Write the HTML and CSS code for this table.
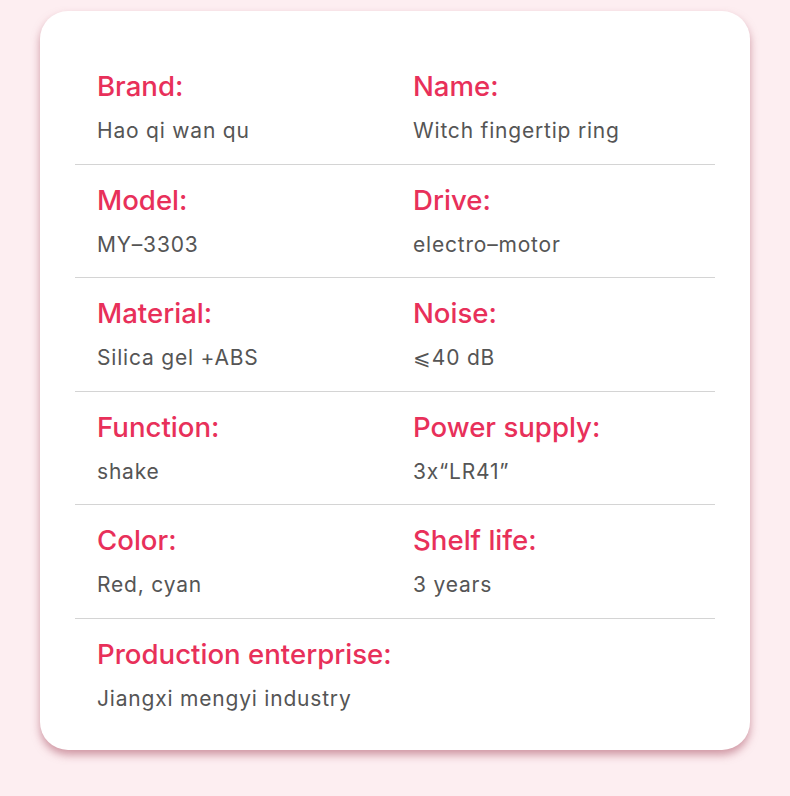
FILE: index.html
```html
<!DOCTYPE html>
<html lang="en">
<head>
<meta charset="utf-8">
<title>Product specs</title>
<link rel="stylesheet" href="styles.css">
</head>
<body>
<div class="card">
  <div class="row">
    <div class="cell"><div class="label">Brand:</div><div class="value">Hao qi wan qu</div></div>
    <div class="cell"><div class="label">Name:</div><div class="value">Witch fingertip ring</div></div>
  </div>
  <div class="row">
    <div class="cell"><div class="label">Model:</div><div class="value">MY–3303</div></div>
    <div class="cell"><div class="label">Drive:</div><div class="value">electro–motor</div></div>
  </div>
  <div class="row">
    <div class="cell"><div class="label">Material:</div><div class="value">Silica gel +ABS</div></div>
    <div class="cell"><div class="label">Noise:</div><div class="value">⩽40 dB</div></div>
  </div>
  <div class="row">
    <div class="cell"><div class="label">Function:</div><div class="value">shake</div></div>
    <div class="cell"><div class="label">Power supply:</div><div class="value">3x“LR41”</div></div>
  </div>
  <div class="row">
    <div class="cell"><div class="label">Color:</div><div class="value">Red, cyan</div></div>
    <div class="cell"><div class="label">Shelf life:</div><div class="value">3 years</div></div>
  </div>
  <div class="row last">
    <div class="cell wide"><div class="label">Production enterprise:</div><div class="value">Jiangxi mengyi industry</div></div>
  </div>
</div>
</body>
</html>
```

FILE: styles.css
```css
html, body {
  margin: 0;
  padding: 0;
}
body {
  background: #fdeef1;
  font-family: Inter, "Liberation Sans", sans-serif;
  width: 790px;
  height: 796px;
  overflow: hidden;
}
.card {
  box-sizing: border-box;
  margin: 11px 40px 0 40px;
  width: 710px;
  height: 739px;
  background: #ffffff;
  border-radius: 28px;
  box-shadow: 0 5px 8px rgba(170, 80, 100, 0.55);
  padding: 40px 35px 0 35px;
}
.row {
  display: grid;
  grid-template-columns: 316px 1fr;
  padding: 20px 0 19.5px 22px;
  border-bottom: 1px solid #d4d4d4;
}
.row.last {
  border-bottom: none;
}
.cell {
  display: flex;
  flex-direction: column;
  gap: 17px;
}
.cell.wide {
  grid-column: 1 / 3;
}
.label {
  color: #e8305a;
  font-size: 27.6px;
  font-weight: 500;
  line-height: 30px;
  white-space: nowrap;
}
.value {
  color: #555555;
  font-size: 21px;
  line-height: 26px;
  letter-spacing: 0.8px;
  white-space: nowrap;
}
```
